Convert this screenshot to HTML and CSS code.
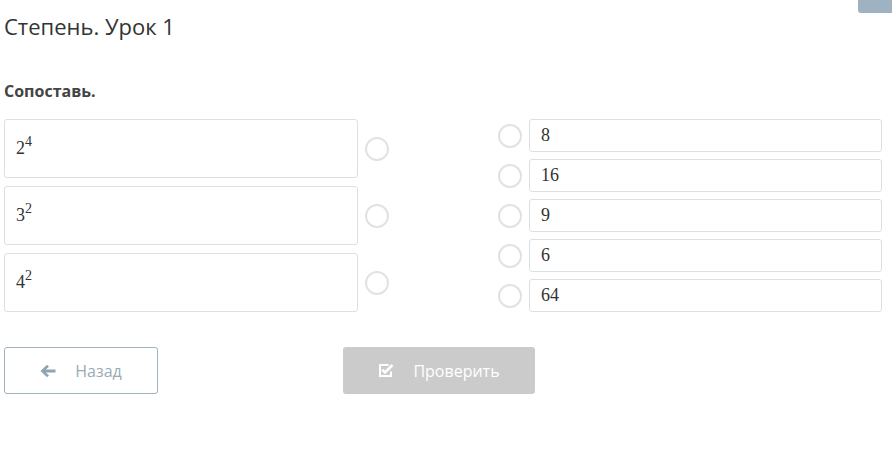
FILE: index.html
```html
<!DOCTYPE html>
<html lang="ru">
<head>
<meta charset="utf-8">
<link rel="stylesheet" href="styles.css">
</head>
<body>
<div class="corner-tab"></div>
<div class="page">
  <h1 class="title">Степень. Урок 1</h1>
  <p class="task">Сопоставь.</p>
  <div class="match">
    <div class="col left">
      <div class="row tall"><div class="box math">2<sup>4</sup></div><span class="radio"></span></div>
      <div class="row tall"><div class="box math">3<sup>2</sup></div><span class="radio"></span></div>
      <div class="row tall"><div class="box math">4<sup>2</sup></div><span class="radio"></span></div>
    </div>
    <div class="col right">
      <div class="row short"><span class="radio"></span><div class="box math">8</div></div>
      <div class="row short"><span class="radio"></span><div class="box math">16</div></div>
      <div class="row short"><span class="radio"></span><div class="box math">9</div></div>
      <div class="row short"><span class="radio"></span><div class="box math">6</div></div>
      <div class="row short"><span class="radio"></span><div class="box math">64</div></div>
    </div>
  </div>
  <div class="actions">
    <button class="btn back">
      <svg class="ico" viewBox="0 0 16 14" width="16" height="14"><path d="M0.5 7 L7 0.8 L9 2.8 L5.8 5.6 H15.5 V8.4 H5.8 L9 11.2 L7 13.2 Z" fill="#8fa4b3"/></svg>
      <span>Назад</span>
    </button>
    <button class="btn check">
      <svg class="ico" viewBox="0 0 16 15" width="16" height="15"><path d="M13 8.5 V13 H2 V2 H10.5" fill="none" stroke="#fff" stroke-width="2"/><path d="M4.2 6.8 L7 9.5 L14.5 2" fill="none" stroke="#fff" stroke-width="2.6"/></svg>
      <span>Проверить</span>
    </button>
  </div>
</div>
</body>
</html>
```
FILE: styles.css
```css
html, body { margin: 0; padding: 0; background: #fff; }
body { font-family: "Open Sans", "Liberation Sans", sans-serif; color: #333; }
.corner-tab {
  position: absolute; top: 0; right: 0;
  width: 34px; height: 13px;
  background: #9fb2c1; border-bottom-left-radius: 3px;
}
.page { padding: 0 10px 0 4px; }
.title { font-size: 22px; font-weight: 400; margin: 0; padding-top: 10px; line-height: 32px; color: #333; }
.task { font-size: 16px; font-weight: 700; color: #444; margin: 38px 0 0; line-height: 22px; }
.match { display: flex; justify-content: space-between; margin-top: 17px; }
.col { display: flex; flex-direction: column; }
.left { width: 385px; gap: 8px; }
.right { width: 384px; gap: 7px; }
.row { display: flex; align-items: center; gap: 7px; }
.box {
  flex: 1; box-sizing: border-box;
  border: 1px solid #dcdfe3; border-radius: 3px; background: #fff;
  display: flex; align-items: center; padding: 0 11px;
}
.tall .box { height: 59px; }
.short .box { height: 33px; }
.math { font-family: "Liberation Serif", "DejaVu Serif", serif; font-size: 18px; color: #333; }
.math sup { font-size: 14px; position: relative; top: -7px; line-height: 0; vertical-align: baseline; }
.radio {
  width: 20px; height: 20px; border-radius: 50%;
  border: 2px solid #e2e2e2; background: #fff; flex: none;
}
.actions { display: flex; margin-top: 35px; }
.btn {
  height: 47px; box-sizing: border-box; border-radius: 3px;
  font-family: "Open Sans", "Liberation Sans", sans-serif; font-size: 16px;
  display: flex; align-items: center; justify-content: center; gap: 19px; cursor: pointer;
}
.back { width: 154px; border: 1px solid #9fb1bd; background: #fff; color: #9aabb7; }
.check { width: 192px; margin-left: 185px; border: none; background: #cbcbcb; color: #fff; }
.ico { display: block; }
```
